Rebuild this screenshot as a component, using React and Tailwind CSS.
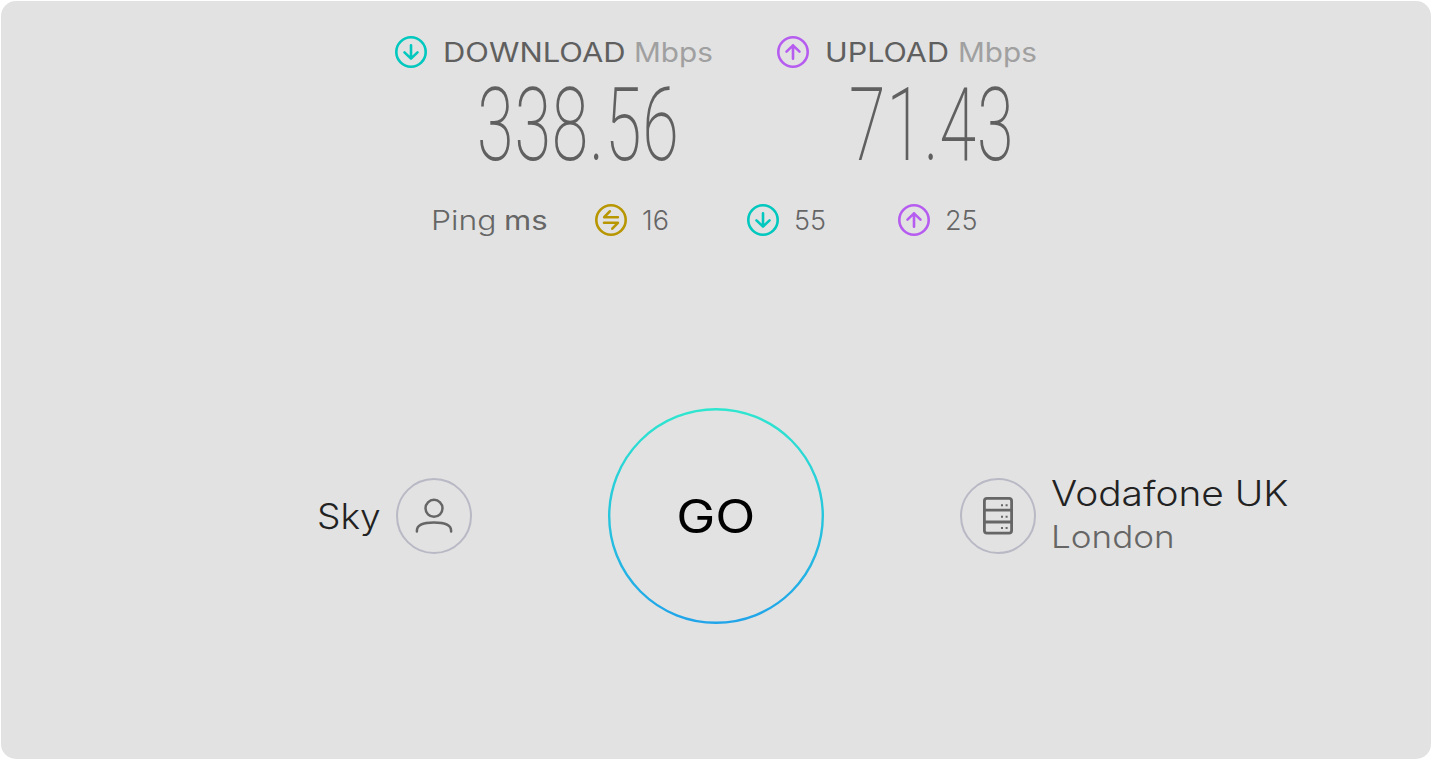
const METRICS = [
  { label: 'DOWNLOAD', value: '338.56', icon: DownIcon, box: 'w-[382px]', labelClass: 'w-[190px]', textScale: 'scale-x-[1.145]', valueClass: 'pl-[82px]' },
  { label: 'UPLOAD', value: '71.43', icon: UpIcon, box: 'w-[280px]', labelClass: 'w-[132px]', textScale: 'scale-x-[1.13]', valueClass: 'pl-[72px]' },
]

const PINGS = [
  { value: '16', icon: IdleIcon, box: 'w-[152px]' },
  { value: '55', icon: DownIcon, box: 'w-[151px]' },
  { value: '25', icon: UpIcon, box: 'w-[100px]' },
]

function RoundIcon({ className, children }) {
  return (
    <svg className={`size-8 shrink-0 ${className}`} viewBox="0 0 32 32" fill="none" stroke="currentColor" strokeWidth="2.6" strokeLinecap="round" strokeLinejoin="round">
      <circle cx="16" cy="16" r="14.7" />
      {children}
    </svg>
  )
}

function DownIcon() {
  return (
    <RoundIcon className="text-[#00c8be]">
      <path d="M16 9.2v13.4M9.5 16.4l6.5 6.2 6.5-6.2" />
    </RoundIcon>
  )
}

function UpIcon() {
  return (
    <RoundIcon className="text-[#b65cf0]">
      <path d="M16 22.8V9.4M9.5 15.6L16 9.4l6.5 6.2" />
    </RoundIcon>
  )
}

function IdleIcon() {
  return (
    <RoundIcon className="text-[#b89600]">
      <path d="M22.9 13.2H9.2l5.6-5.9M9 18.8h13.9l-5.6 5.9" />
    </RoundIcon>
  )
}

function UserIcon() {
  return (
    <svg className="size-[76px] shrink-0" viewBox="0 0 76 76" fill="none">
      <circle cx="38" cy="38" r="37" stroke="#b9b9c6" strokeWidth="2" />
      <g stroke="#666" strokeWidth="2.5" strokeLinecap="round">
        <circle cx="38" cy="30.3" r="8.5" />
        <path d="M20.9 53.6v-.9c0-5.2 5.6-8.1 17.1-8.1s17.1 2.9 17.1 8.1v.9" />
      </g>
    </svg>
  )
}

function ServerIcon() {
  return (
    <svg className="size-[76px] shrink-0" viewBox="0 0 76 76" fill="none">
      <circle cx="38" cy="38" r="37" stroke="#b9b9c6" strokeWidth="2" />
      <g stroke="#666" strokeWidth="2.8">
        <rect x="24.4" y="20.4" width="27.2" height="34.8" rx="2.6" />
        <path d="M24.3 32.1h27.4M24.3 44h27.4" />
      </g>
      <path d="M41 26.3h2v2h-2zM45.6 26.3h2v2h-2zM41 37.8h2v2h-2zM45.6 37.8h2v2h-2zM41 49h2v2h-2zM45.6 49h2v2h-2z" fill="#666" />
    </svg>
  )
}

export default function App() {
  return (
    <div className="h-[760px] w-[1432px] overflow-hidden bg-white p-px font-['Inter',sans-serif]">
      <main className="h-[758px] rounded-[15px] bg-[#e2e2e2] whitespace-nowrap">
        {/* Results */}
        <section className="flex pt-[35px] pl-[394px]">
          {METRICS.map(({ label, value, icon: Icon, box, labelClass, textScale, valueClass }) => (
            <div key={label} className={box}>
              <div className="flex h-8 items-center text-[27px] leading-8">
                <Icon />
                <span className={`ml-4 pt-0.5 ${labelClass}`}>
                  <span className={`inline-block origin-left text-[#5f5f5f] ${textScale}`}>{label}</span>
                </span>
                <span className="ml-px inline-block origin-left scale-x-[1.1] pt-0.5 text-[#a0a0a0]">Mbps</span>
              </div>
              <div className={`h-[136px] pt-px ${valueClass}`}>
                <span className="inline-block origin-left scale-x-[0.65] font-['Roboto',sans-serif] text-[102px] leading-[112px] font-extralight tracking-[1.4px] text-[#606060]">{value}</span>
              </div>
            </div>
          ))}
        </section>

        {/* Latency */}
        <section className="flex h-8 items-center pl-[430px] text-[27px] leading-8 text-[#666]">
          <span className="w-[73px] pt-0.5">
            <span className="inline-block origin-left scale-x-[1.18] font-light">Ping</span>
          </span>
          <span className="w-[91px] pt-0.5">
            <span className="inline-block origin-left scale-x-[1.15]">ms</span>
          </span>
          {PINGS.map(({ value, icon: Icon, box }) => (
            <div key={value} className={`flex items-center ${box}`}>
              <Icon />
              <span className="ml-[15px] pt-0.5 font-light">{value}</span>
            </div>
          ))}
        </section>

        {/* Provider, start button and server */}
        <section className="mt-[172px] flex h-[216px] items-center pl-[316px]">
          <div className="flex w-[291px] items-center">
            <span className="w-[79px]">
              <span className="inline-block origin-left scale-x-[1.06] text-[35px] leading-10 font-light text-[#222]">Sky</span>
            </span>
            <UserIcon />
          </div>
          <button className="grid size-[216px] place-items-center">
            <svg className="col-start-1 row-start-1 size-[216px]" viewBox="0 0 216 216" fill="none">
              <defs>
                <linearGradient id="ring" x1="0" y1="0" x2="0" y2="1">
                  <stop stopColor="#2ee6cf" />
                  <stop offset="1" stopColor="#20a4ea" />
                </linearGradient>
              </defs>
              <circle cx="108" cy="108" r="106.8" stroke="url(#ring)" strokeWidth="2.4" />
            </svg>
            <span className="col-start-1 row-start-1 scale-x-[1.14] text-[46px] leading-none font-normal text-black">GO</span>
          </button>
          <div className="ml-[136px] flex items-center">
            <ServerIcon />
            <div className="ml-[15px] flex flex-col items-start pb-[5px]">
              <span className="origin-left scale-x-[1.11] text-[35px] leading-[46px] font-light text-[#222]">Vodafone UK</span>
              <span className="origin-left scale-x-[1.13] text-[31px] leading-[42px] font-light text-[#666]">London</span>
            </div>
          </div>
        </section>
      </main>
    </div>
  )
}
